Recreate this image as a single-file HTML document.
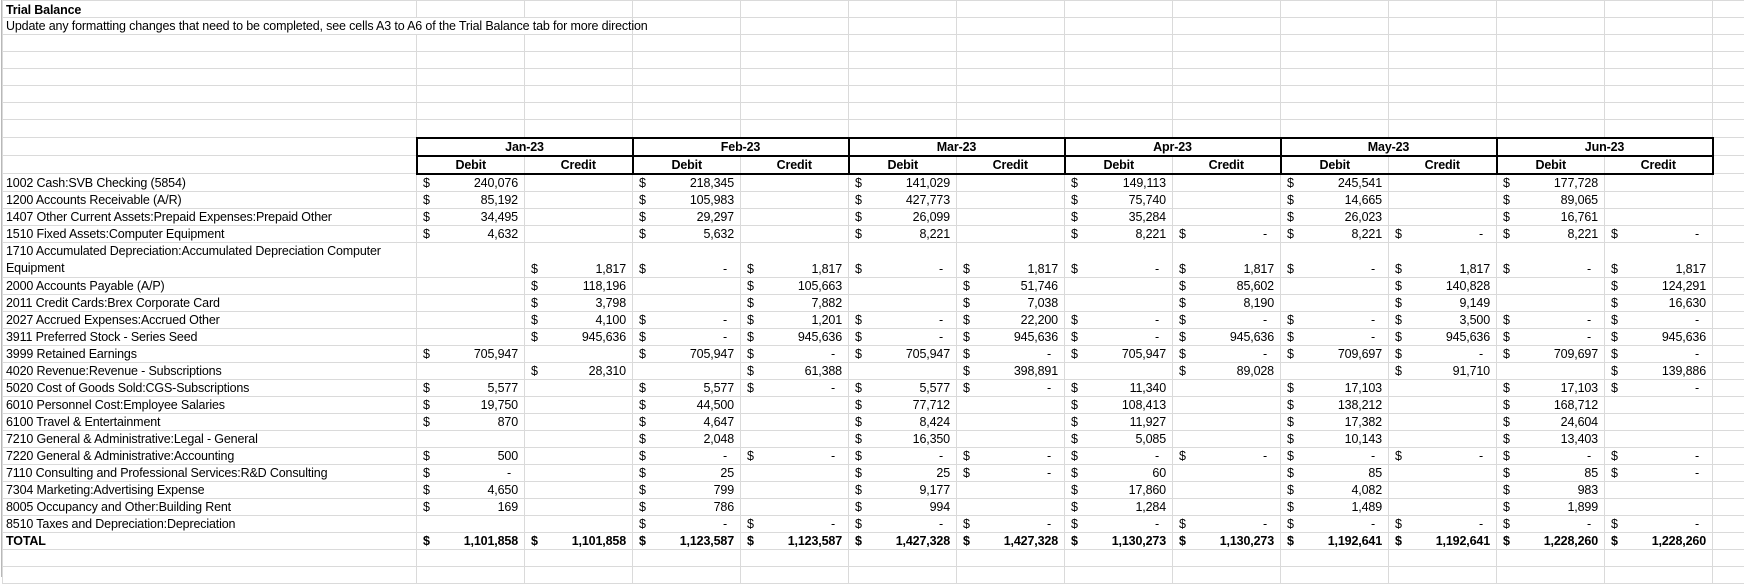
<!DOCTYPE html>
<html><head><meta charset="utf-8"><style>
html,body{margin:0;padding:0;background:#fff;width:1744px;height:577px;overflow:hidden}
table{position:absolute;left:2px;top:0;border-collapse:collapse;table-layout:fixed;width:1742px;font-family:"Liberation Sans",Arial,sans-serif;font-size:12.5px;letter-spacing:-0.15px;color:#000}
td{border:1px solid #dadada;padding:0 6px 0 0;height:16px;line-height:16px;text-align:right;white-space:nowrap;overflow:visible;vertical-align:bottom}
td.a{text-align:left;padding-left:3px;overflow:visible}
i{float:left;font-style:normal;padding-left:6px}
s{text-decoration:none;padding-right:7px}
tr.h td{text-align:center;font-weight:bold;padding:0}
.m{border:2px solid #000}
.dl{border-left:2px solid #000;border-bottom:2px solid #000}
.cr{border-right:2px solid #000;border-bottom:2px solid #000}
tr.t td{font-weight:bold}
tr.t td.x{border-top:1px solid #000}
#lb{position:absolute;left:1px;top:0;width:1px;height:577px;background:#b8b8b8}
</style></head><body>
<div id="lb"></div>
<table>
<colgroup><col style="width:414px"><col style="width:108px"><col style="width:108px"><col style="width:108px"><col style="width:108px"><col style="width:108px"><col style="width:108px"><col style="width:108px"><col style="width:108px"><col style="width:108px"><col style="width:108px"><col style="width:108px"><col style="width:108px"><col style="width:32px"></colgroup>
<tr><td class="a" style="height:13px;line-height:13px;font-weight:bold">Trial Balance</td><td></td><td></td><td></td><td></td><td></td><td></td><td></td><td></td><td></td><td></td><td></td><td></td><td></td></tr>
<tr><td class="a" colspan="3">Update any formatting changes that need to be completed, see cells A3 to A6 of the Trial Balance tab for more direction</td><td></td><td></td><td></td><td></td><td></td><td></td><td></td><td></td><td></td><td></td><td></td></tr>
<tr><td></td><td></td><td></td><td></td><td></td><td></td><td></td><td></td><td></td><td></td><td></td><td></td><td></td><td></td></tr>
<tr><td></td><td></td><td></td><td></td><td></td><td></td><td></td><td></td><td></td><td></td><td></td><td></td><td></td><td></td></tr>
<tr><td></td><td></td><td></td><td></td><td></td><td></td><td></td><td></td><td></td><td></td><td></td><td></td><td></td><td></td></tr>
<tr><td></td><td></td><td></td><td></td><td></td><td></td><td></td><td></td><td></td><td></td><td></td><td></td><td></td><td></td></tr>
<tr><td></td><td></td><td></td><td></td><td></td><td></td><td></td><td></td><td></td><td></td><td></td><td></td><td></td><td></td></tr>
<tr><td style="height:17px"></td><td></td><td></td><td></td><td></td><td></td><td></td><td></td><td></td><td></td><td></td><td></td><td></td><td></td></tr>
<tr class="h"><td style="height:15px"></td><td class="m" colspan="2">Jan-23</td><td class="m" colspan="2">Feb-23</td><td class="m" colspan="2">Mar-23</td><td class="m" colspan="2">Apr-23</td><td class="m" colspan="2">May-23</td><td class="m" colspan="2">Jun-23</td><td></td></tr>
<tr class="h"><td style="height:15px"></td><td class="dl">Debit</td><td class="cr">Credit</td><td class="dl">Debit</td><td class="cr">Credit</td><td class="dl">Debit</td><td class="cr">Credit</td><td class="dl">Debit</td><td class="cr">Credit</td><td class="dl">Debit</td><td class="cr">Credit</td><td class="dl">Debit</td><td class="cr">Credit</td><td></td></tr>
<tr><td class="a">1002 Cash:SVB Checking (5854)</td><td><i>$</i>240,076</td><td></td><td><i>$</i>218,345</td><td></td><td><i>$</i>141,029</td><td></td><td><i>$</i>149,113</td><td></td><td><i>$</i>245,541</td><td></td><td><i>$</i>177,728</td><td></td><td></td></tr>
<tr><td class="a">1200 Accounts Receivable (A/R)</td><td><i>$</i>85,192</td><td></td><td><i>$</i>105,983</td><td></td><td><i>$</i>427,773</td><td></td><td><i>$</i>75,740</td><td></td><td><i>$</i>14,665</td><td></td><td><i>$</i>89,065</td><td></td><td></td></tr>
<tr><td class="a">1407 Other Current Assets:Prepaid Expenses:Prepaid Other</td><td><i>$</i>34,495</td><td></td><td><i>$</i>29,297</td><td></td><td><i>$</i>26,099</td><td></td><td><i>$</i>35,284</td><td></td><td><i>$</i>26,023</td><td></td><td><i>$</i>16,761</td><td></td><td></td></tr>
<tr><td class="a">1510 Fixed Assets:Computer Equipment</td><td><i>$</i>4,632</td><td></td><td><i>$</i>5,632</td><td></td><td><i>$</i>8,221</td><td></td><td><i>$</i>8,221</td><td><i>$</i><s>-</s></td><td><i>$</i>8,221</td><td><i>$</i><s>-</s></td><td><i>$</i>8,221</td><td><i>$</i><s>-</s></td><td></td></tr>
<tr><td class="a" style="height:33px;white-space:normal;line-height:17px">1710 Accumulated Depreciation:Accumulated Depreciation Computer Equipment</td><td></td><td><i>$</i>1,817</td><td><i>$</i><s>-</s></td><td><i>$</i>1,817</td><td><i>$</i><s>-</s></td><td><i>$</i>1,817</td><td><i>$</i><s>-</s></td><td><i>$</i>1,817</td><td><i>$</i><s>-</s></td><td><i>$</i>1,817</td><td><i>$</i><s>-</s></td><td><i>$</i>1,817</td><td></td></tr>
<tr><td class="a">2000 Accounts Payable (A/P)</td><td></td><td><i>$</i>118,196</td><td></td><td><i>$</i>105,663</td><td></td><td><i>$</i>51,746</td><td></td><td><i>$</i>85,602</td><td></td><td><i>$</i>140,828</td><td></td><td><i>$</i>124,291</td><td></td></tr>
<tr><td class="a">2011 Credit Cards:Brex Corporate Card</td><td></td><td><i>$</i>3,798</td><td></td><td><i>$</i>7,882</td><td></td><td><i>$</i>7,038</td><td></td><td><i>$</i>8,190</td><td></td><td><i>$</i>9,149</td><td></td><td><i>$</i>16,630</td><td></td></tr>
<tr><td class="a">2027 Accrued Expenses:Accrued Other</td><td></td><td><i>$</i>4,100</td><td><i>$</i><s>-</s></td><td><i>$</i>1,201</td><td><i>$</i><s>-</s></td><td><i>$</i>22,200</td><td><i>$</i><s>-</s></td><td><i>$</i><s>-</s></td><td><i>$</i><s>-</s></td><td><i>$</i>3,500</td><td><i>$</i><s>-</s></td><td><i>$</i><s>-</s></td><td></td></tr>
<tr><td class="a">3911 Preferred Stock - Series Seed</td><td></td><td><i>$</i>945,636</td><td><i>$</i><s>-</s></td><td><i>$</i>945,636</td><td><i>$</i><s>-</s></td><td><i>$</i>945,636</td><td><i>$</i><s>-</s></td><td><i>$</i>945,636</td><td><i>$</i><s>-</s></td><td><i>$</i>945,636</td><td><i>$</i><s>-</s></td><td><i>$</i>945,636</td><td></td></tr>
<tr><td class="a">3999 Retained Earnings</td><td><i>$</i>705,947</td><td></td><td><i>$</i>705,947</td><td><i>$</i><s>-</s></td><td><i>$</i>705,947</td><td><i>$</i><s>-</s></td><td><i>$</i>705,947</td><td><i>$</i><s>-</s></td><td><i>$</i>709,697</td><td><i>$</i><s>-</s></td><td><i>$</i>709,697</td><td><i>$</i><s>-</s></td><td></td></tr>
<tr><td class="a">4020 Revenue:Revenue - Subscriptions</td><td></td><td><i>$</i>28,310</td><td></td><td><i>$</i>61,388</td><td></td><td><i>$</i>398,891</td><td></td><td><i>$</i>89,028</td><td></td><td><i>$</i>91,710</td><td></td><td><i>$</i>139,886</td><td></td></tr>
<tr><td class="a">5020 Cost of Goods Sold:CGS-Subscriptions</td><td><i>$</i>5,577</td><td></td><td><i>$</i>5,577</td><td><i>$</i><s>-</s></td><td><i>$</i>5,577</td><td><i>$</i><s>-</s></td><td><i>$</i>11,340</td><td></td><td><i>$</i>17,103</td><td></td><td><i>$</i>17,103</td><td><i>$</i><s>-</s></td><td></td></tr>
<tr><td class="a">6010 Personnel Cost:Employee Salaries</td><td><i>$</i>19,750</td><td></td><td><i>$</i>44,500</td><td></td><td><i>$</i>77,712</td><td></td><td><i>$</i>108,413</td><td></td><td><i>$</i>138,212</td><td></td><td><i>$</i>168,712</td><td></td><td></td></tr>
<tr><td class="a">6100 Travel &amp; Entertainment</td><td><i>$</i>870</td><td></td><td><i>$</i>4,647</td><td></td><td><i>$</i>8,424</td><td></td><td><i>$</i>11,927</td><td></td><td><i>$</i>17,382</td><td></td><td><i>$</i>24,604</td><td></td><td></td></tr>
<tr><td class="a">7210 General &amp; Administrative:Legal - General</td><td></td><td></td><td><i>$</i>2,048</td><td></td><td><i>$</i>16,350</td><td></td><td><i>$</i>5,085</td><td></td><td><i>$</i>10,143</td><td></td><td><i>$</i>13,403</td><td></td><td></td></tr>
<tr><td class="a">7220 General &amp; Administrative:Accounting</td><td><i>$</i>500</td><td></td><td><i>$</i><s>-</s></td><td><i>$</i><s>-</s></td><td><i>$</i><s>-</s></td><td><i>$</i><s>-</s></td><td><i>$</i><s>-</s></td><td><i>$</i><s>-</s></td><td><i>$</i><s>-</s></td><td><i>$</i><s>-</s></td><td><i>$</i><s>-</s></td><td><i>$</i><s>-</s></td><td></td></tr>
<tr><td class="a">7110 Consulting and Professional Services:R&amp;D Consulting</td><td><i>$</i><s>-</s></td><td></td><td><i>$</i>25</td><td></td><td><i>$</i>25</td><td><i>$</i><s>-</s></td><td><i>$</i>60</td><td></td><td><i>$</i>85</td><td></td><td><i>$</i>85</td><td><i>$</i><s>-</s></td><td></td></tr>
<tr><td class="a">7304 Marketing:Advertising Expense</td><td><i>$</i>4,650</td><td></td><td><i>$</i>799</td><td></td><td><i>$</i>9,177</td><td></td><td><i>$</i>17,860</td><td></td><td><i>$</i>4,082</td><td></td><td><i>$</i>983</td><td></td><td></td></tr>
<tr><td class="a">8005 Occupancy and Other:Building Rent</td><td><i>$</i>169</td><td></td><td><i>$</i>786</td><td></td><td><i>$</i>994</td><td></td><td><i>$</i>1,284</td><td></td><td><i>$</i>1,489</td><td></td><td><i>$</i>1,899</td><td></td><td></td></tr>
<tr><td class="a">8510 Taxes and Depreciation:Depreciation</td><td></td><td></td><td><i>$</i><s>-</s></td><td><i>$</i><s>-</s></td><td><i>$</i><s>-</s></td><td><i>$</i><s>-</s></td><td><i>$</i><s>-</s></td><td><i>$</i><s>-</s></td><td><i>$</i><s>-</s></td><td><i>$</i><s>-</s></td><td><i>$</i><s>-</s></td><td><i>$</i><s>-</s></td><td></td></tr>
<tr class="t"><td class="a">TOTAL</td><td class="x"><i>$</i>1,101,858</td><td class="x"><i>$</i>1,101,858</td><td class="x"><i>$</i>1,123,587</td><td class="x"><i>$</i>1,123,587</td><td class="x"><i>$</i>1,427,328</td><td class="x"><i>$</i>1,427,328</td><td class="x"><i>$</i>1,130,273</td><td class="x"><i>$</i>1,130,273</td><td class="x"><i>$</i>1,192,641</td><td class="x"><i>$</i>1,192,641</td><td class="x"><i>$</i>1,228,260</td><td class="x"><i>$</i>1,228,260</td><td></td></tr>
<tr><td></td><td></td><td></td><td></td><td></td><td></td><td></td><td></td><td></td><td></td><td></td><td></td><td></td><td></td></tr>
<tr><td></td><td></td><td></td><td></td><td></td><td></td><td></td><td></td><td></td><td></td><td></td><td></td><td></td><td></td></tr>
</table>
</body></html>
